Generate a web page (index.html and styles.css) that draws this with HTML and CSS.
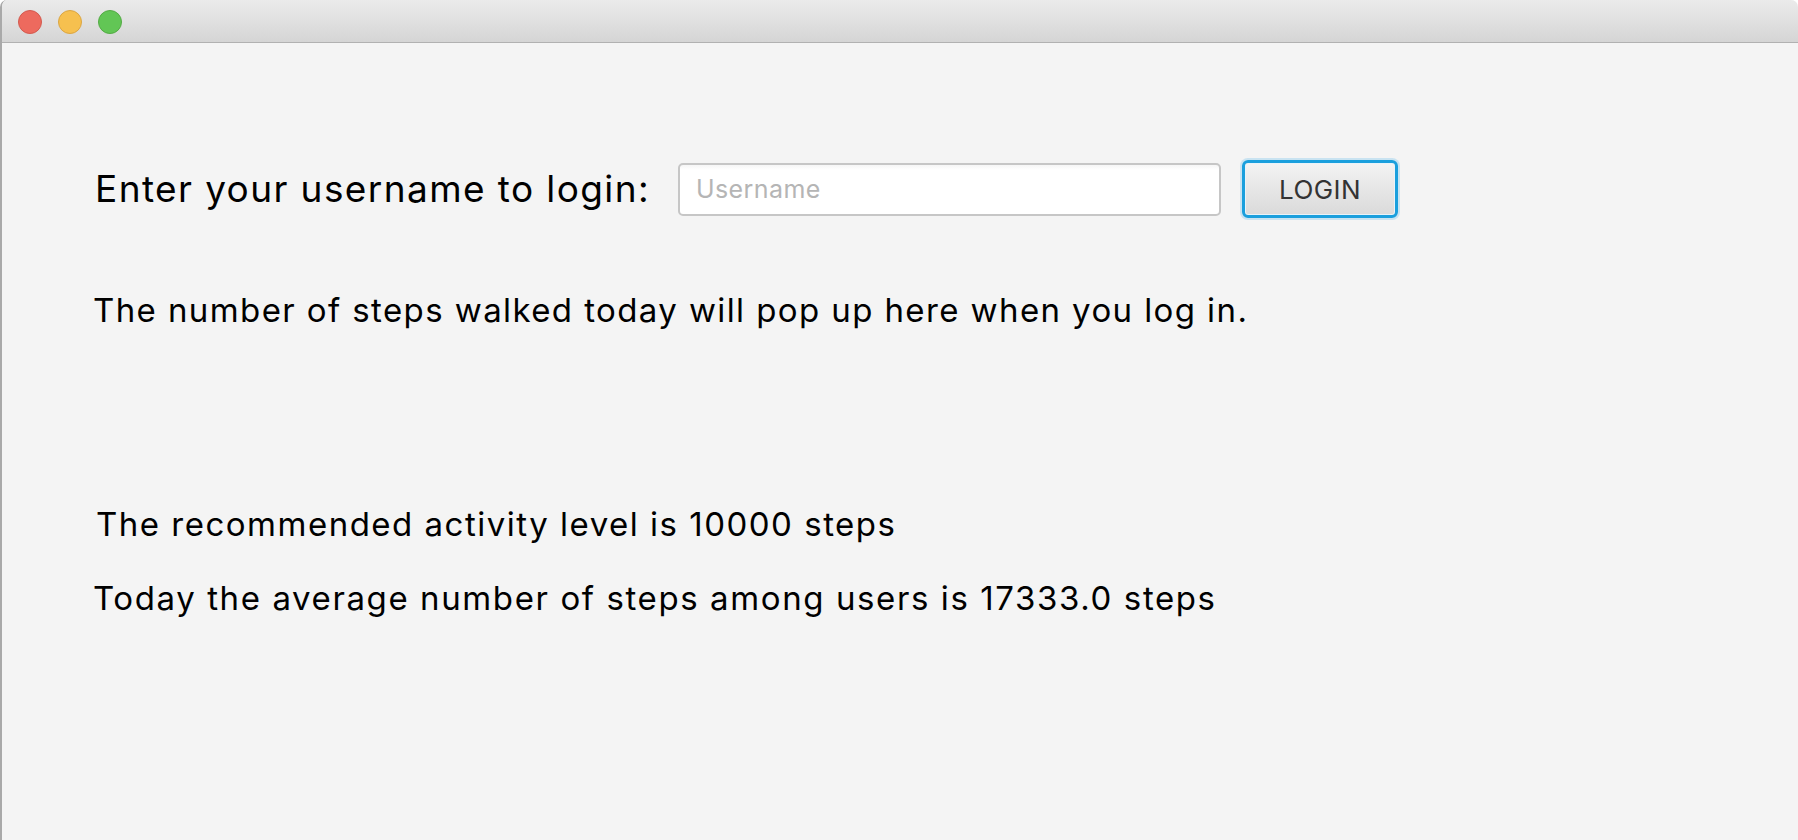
FILE: index.html
```html
<!DOCTYPE html>
<html lang="en">
<head>
<meta charset="utf-8">
<title>Step Tracker</title>
<link rel="stylesheet" href="styles.css">
</head>
<body>
<div class="window">
  <div class="titlebar">
    <span class="light light-close"></span>
    <span class="light light-min"></span>
    <span class="light light-max"></span>
  </div>
  <div class="content">
    <div class="login-row">
      <label class="prompt" for="username">Enter your username to login:</label>
      <input class="username" id="username" type="text" placeholder="Username">
      <button class="login-btn" type="button">LOGIN</button>
    </div>
    <p class="status">The number of steps walked today will pop up here when you log in.</p>
    <div class="stats">
      <p class="stat stat-recommended">The recommended activity level is 10000 steps</p>
      <p class="stat stat-average">Today the average number of steps among users is 17333.0 steps</p>
    </div>
  </div>
</div>
</body>
</html>
```

FILE: styles.css
```css
html, body {
  margin: 0;
  padding: 0;
  height: 100%;
  background: #ffffff;
  overflow: hidden;
}

.window {
  height: 840px;
  display: flex;
  flex-direction: column;
  background: #f4f4f4;
  border-left: 2px solid #a9a9a9;
  border-radius: 7px 7px 0 0;
  overflow: hidden;
  font-family: "Inter", "Liberation Sans", sans-serif;
  color: #000;
}

.titlebar {
  height: 42px;
  flex: none;
  display: flex;
  align-items: center;
  gap: 16px;
  padding-left: 16px;
  background: linear-gradient(#ebebeb, #d5d5d5);
  border-bottom: 1px solid #b1b1b1;
}

.light {
  width: 22px;
  height: 22px;
  border-radius: 50%;
  box-sizing: content-box;
  margin-top: 2px;
}
.light-close { background: #ed6a5e; border: 1px solid #d35a4f; }
.light-min { background: #f6c04f; border: 1px solid #dba643; }
.light-max { background: #62c655; border: 1px solid #54ab45; }

.content {
  padding: 117px 0 0 91px;
}

.login-row {
  display: grid;
  grid-template-columns: 564px 543px 156px;
  column-gap: 21px;
  align-items: center;
  height: 58px;
}

.prompt {
  padding-left: 2px;
  font-size: 37px;
  line-height: 58px;
  white-space: nowrap;
  letter-spacing: 1.4px;
}

.username {
  box-sizing: border-box;
  width: 543px;
  height: 53px;
  margin: 0;
  padding: 0 0 0 16px;
  border: 2px solid #c6c6c6;
  border-radius: 5px;
  background: linear-gradient(#f6f6f6, #ffffff 5px);
  font-family: "Inter", "Liberation Sans", sans-serif;
  font-size: 25px;
  letter-spacing: 0.4px;
  color: #222;
  outline: none;
}
.username::placeholder {
  color: #b5b5b5;
}

.login-btn {
  box-sizing: border-box;
  width: 156px;
  height: 58px;
  margin: 0;
  padding: 0;
  border: 3px solid #1a9fdd;
  border-radius: 6px;
  background: linear-gradient(#f3f3f3, #dadada);
  box-shadow: 0 0 0 2px rgba(120, 195, 235, 0.35), inset 0 0 0 1px #e8f3f9;
  font-family: "Inter", "Liberation Sans", sans-serif;
  font-size: 26px;
  color: #333;
  letter-spacing: 0.4px;
}

.status {
  margin: 72px 0 0 0;
  font-size: 33px;
  line-height: 40px;
  letter-spacing: 1.4px;
}

.stats {
  margin-top: 174px;
  display: flex;
  flex-direction: column;
  gap: 34px;
}

.stat {
  margin: 0;
  font-size: 33px;
  line-height: 40px;
  letter-spacing: 1.5px;
}

.stat-recommended {
  padding-left: 3px;
}

.stat-average {
  letter-spacing: 1.6px;
}
```
